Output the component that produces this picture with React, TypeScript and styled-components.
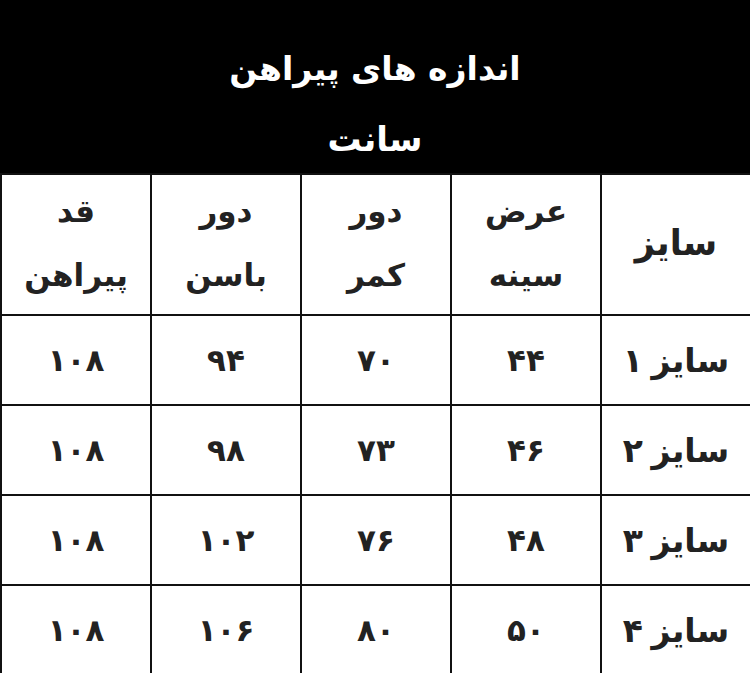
import styled, { createGlobalStyle } from "styled-components";

const GlobalStyle = createGlobalStyle`
  html, body {
    margin: 0;
    padding: 0;
    background: #fff;
  }
  body {
    font-family: "DejaVu Sans", "Noto Sans", sans-serif;
  }
`;

const headers = [
  ["سایز"],
  ["عرض", "سینه"],
  ["دور", "کمر"],
  ["دور", "باسن"],
  ["قد", "پیراهن"],
];

const rows = [
  ["سایز ۱", "۴۴", "۷۰", "۹۴", "۱۰۸"],
  ["سایز ۲", "۴۶", "۷۳", "۹۸", "۱۰۸"],
  ["سایز ۳", "۴۸", "۷۶", "۱۰۲", "۱۰۸"],
  ["سایز ۴", "۵۰", "۸۰", "۱۰۶", "۱۰۸"],
];

export default function App() {
  return (
    <>
      <GlobalStyle />
      <Page dir="rtl">
        <Banner>
          <Title>اندازه های پیراهن</Title>
          <Unit>سانت</Unit>
        </Banner>
        <Table>
          {headers.map((h, i) => (
            <HeadCell key={i} $single={h.length === 1}>
              {h.map((line, j) => (
                <span key={j}>{line}</span>
              ))}
            </HeadCell>
          ))}
          {rows.map((r, i) =>
            r.map((v, j) => (
              <Cell key={`${i}-${j}`} $label={j === 0}>
                {v}
              </Cell>
            ))
          )}
        </Table>
      </Page>
    </>
  );
}

const Page = styled.div`
  width: 750px;
  height: 673px;
  overflow: hidden;
  background: #fff;
`;

const Banner = styled.div`
  background: #000;
  color: #fff;
  height: 173px;
  display: flex;
  flex-direction: column;
  align-items: center;
  padding-top: 44px;
  box-sizing: border-box;
`;

const Title = styled.div`
  font-size: 33px;
  font-weight: bold;
  line-height: 50px;
`;

const Unit = styled.div`
  font-size: 34px;
  font-weight: bold;
  line-height: 50px;
  margin-top: 20px;
`;

const Table = styled.div`
  display: grid;
  grid-template-columns: repeat(5, 150px);
  grid-template-rows: 141px 90px 90px 90px 90px;
  border-top: 2px solid #111;
`;

const HeadCell = styled.div<{ $single: boolean }>`
  display: flex;
  flex-direction: column;
  align-items: center;
  justify-content: center;
  border-left: 2px solid #111;
  border-bottom: 2px solid #111;
  color: #222;
  font-weight: bold;
  font-size: ${(p) => (p.$single ? "35px" : "31px")};
  line-height: 64px;
  padding-bottom: 4px;
`;

const Cell = styled.div<{ $label: boolean }>`
  display: flex;
  align-items: center;
  justify-content: center;
  border-left: 2px solid #111;
  border-bottom: 2px solid #111;
  color: #222;
  font-weight: bold;
  font-size: ${(p) => (p.$label ? "33px" : "31px")};
  word-spacing: ${(p) => (p.$label ? "-3px" : "0")};
`;
